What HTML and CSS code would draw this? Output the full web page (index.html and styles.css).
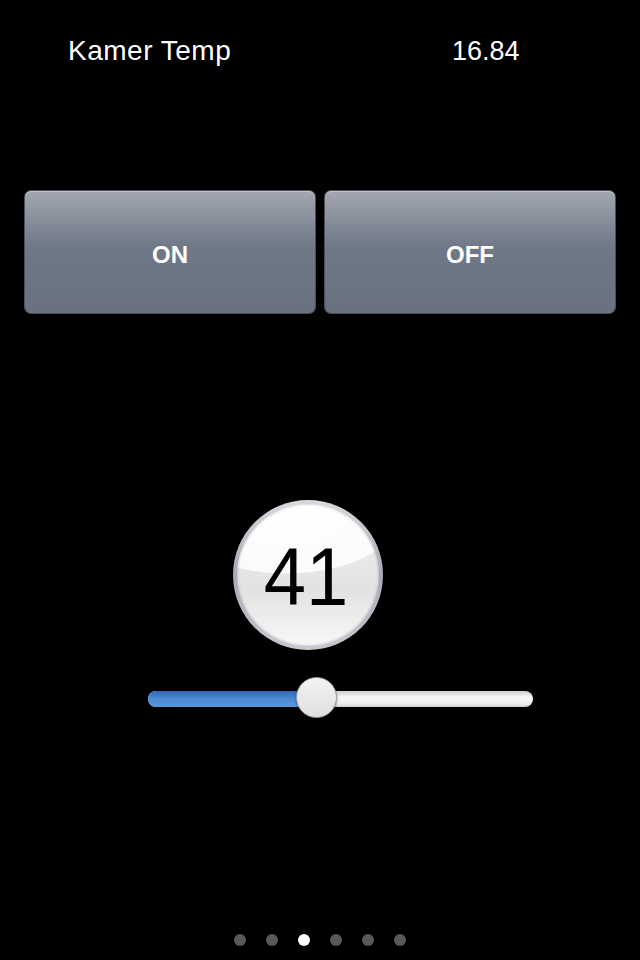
FILE: index.html
```html
<!DOCTYPE html>
<html>
<head>
<meta charset="utf-8">
<link rel="stylesheet" href="styles.css">
</head>
<body>
<div class="screen">
  <div class="header">
    <span class="label">Kamer Temp</span>
    <span class="value">16.84</span>
  </div>
  <div class="buttons">
    <button class="btn">ON</button>
    <button class="btn">OFF</button>
  </div>
  <div class="knob-row">
    <div class="knob"><div class="knob-face"><span>41</span></div></div>
  </div>
  <div class="slider">
    <div class="track">
      <div class="fill" style="width:168px"></div>
      <div class="thumb" style="left:148px"></div>
    </div>
  </div>
  <div class="spacer"></div>
  <div class="dots">
    <span class="dot"></span><span class="dot"></span><span class="dot active"></span><span class="dot"></span><span class="dot"></span><span class="dot"></span>
  </div>
</div>
</body>
</html>
```

FILE: styles.css
```css
html, body {
  margin: 0;
  padding: 0;
  background: #000;
}
.screen {
  width: 640px;
  height: 960px;
  display: flex;
  flex-direction: column;
  font-family: "Liberation Sans", Arial, sans-serif;
  color: #fff;
}
.header {
  display: flex;
  height: 40px;
  margin-top: 31px;
  align-items: center;
  font-size: 28px;
}
.label {
  width: 384px;
  padding-left: 68px;
  letter-spacing: 0.5px;
}
.value {
  font-size: 27px;
}
.buttons {
  display: flex;
  gap: 8px;
  padding: 0 24px;
  margin-top: 119px;
}
.btn {
  flex: 1;
  height: 124px;
  border: 1px solid #4a505a;
  border-radius: 7px;
  background: linear-gradient(to bottom, #a2a7b1 0%, #8a909c 22%, #6f7887 46%, #69717f 100%);
  box-shadow: inset 0 1px 0 rgba(255,255,255,0.35);
  color: #fff;
  font-family: "Liberation Sans", Arial, sans-serif;
  font-weight: bold;
  font-size: 24px;
  padding: 6px 0 0 0;
}
.knob-row {
  margin-top: 186px;
  padding-left: 233px;
}
.knob {
  width: 150px;
  height: 150px;
  border-radius: 50%;
  background: linear-gradient(to bottom, #d8d8de 0%, #a9a9b3 50%, #c9c9d1 100%);
  padding: 4px;
  box-sizing: border-box;
}
.knob-face {
  width: 100%;
  height: 100%;
  border-radius: 50%;
  background:
    radial-gradient(ellipse 140% 70% at 35% 10%, #ffffff 0%, #fbfbfb 55%, rgba(255,255,255,0) 56%),
    linear-gradient(to bottom, #f4f4f4 0%, #e2e2e2 60%, #f8f8f8 100%);
  box-shadow: inset 0 0 3px rgba(0,0,0,0.25);
  display: flex;
  align-items: center;
  justify-content: center;
}
.knob-face span {
  color: #000;
  font-size: 76px;
  letter-spacing: 0;
  line-height: 1;
  margin: 4px 0 0 -4px;
  transform: scaleY(1.07);
}
.slider {
  margin-top: 28px;
  padding-left: 148px;
  height: 40px;
}
.track {
  position: relative;
  width: 385px;
  height: 16px;
  margin-top: 13px;
  border-radius: 8px;
  background: linear-gradient(to bottom, #d0d0d0 0%, #f6f6f6 40%, #ececec 80%, #cfcfcf 100%);
}
.fill {
  height: 16px;
  border-radius: 8px 0 0 8px;
  background: linear-gradient(to bottom, #2f68b4 0%, #4a88d2 45%, #5a98dc 100%);
}
.thumb {
  position: absolute;
  top: -14px;
  width: 41px;
  height: 41px;
  border-radius: 50%;
  background: linear-gradient(to bottom, #f4f4f4 0%, #dedede 100%);
  border: 1px solid #9a9a9a;
  box-sizing: border-box;
  box-shadow: 0 1px 2px rgba(0,0,0,0.5);
}
.spacer {
  flex: 1;
}
.dots {
  display: flex;
  justify-content: center;
  gap: 20px;
  margin-bottom: 14px;
}
.dot {
  width: 12px;
  height: 12px;
  border-radius: 50%;
  background: #595959;
}
.dot.active {
  background: #fff;
}
```
